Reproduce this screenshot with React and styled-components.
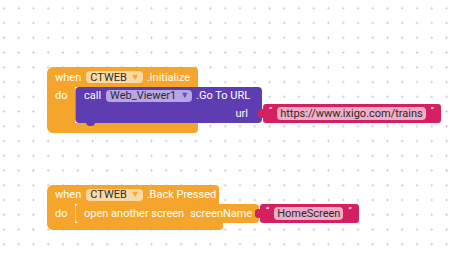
import React from 'react';
import styled, { createGlobalStyle } from 'styled-components';

const ORANGE = '#f6a52c';
const PURPLE = '#5e3cb1';
const PINK = '#d41f61';

const GlobalStyle = createGlobalStyle`
    html, body {
        margin: 0;
        padding: 0;
    }
    body {
        width: 456px;
        height: 257px;
        overflow: hidden;
        font-family: Roboto, "Liberation Sans", sans-serif;
    }
`;

const Workspace = styled.div`
    position: relative;
    width: 456px;
    height: 257px;
    background-color: #fff;
    background-image: radial-gradient(circle, #c9c9c9 0.8px, transparent 1.4px);
    background-size: 14.75px 14.75px;
    background-position: -3.4px 0.9px;
`;

// top-level block stacks sit at their own spot on the canvas
const Stack = styled.div`
    position: absolute;
    left: ${props => props.x}px;
    top: ${props => props.y}px;
    display: flex;
    flex-direction: column;
    align-items: flex-start;
`;

const Header = styled.div`
    width: ${props => props.width}px;
    height: ${props => props.height}px;
    box-sizing: border-box;
    background: ${ORANGE};
    border-radius: 6px 4px 0 0;
    display: flex;
    align-items: center;
    gap: 4px;
    padding-left: 8px;
`;

const Body = styled.div`
    display: flex;
    align-items: flex-start;
`;

const Arm = styled.div`
    width: 28px;
    align-self: stretch;
    box-sizing: border-box;
    background: ${ORANGE};
    display: flex;
    align-items: flex-start;
    font-size: 11px;
    line-height: 1;
    padding: ${props => props.top}px 0 0 8px;
`;

const Footer = styled.div`
    width: ${props => props.width}px;
    height: ${props => props.height}px;
    background: ${ORANGE};
    border-radius: 0 0 4px 6px;
`;

const Label = styled.span`
    color: #fff;
    font-size: 11px;
    line-height: 1;
    white-space: nowrap;
    margin-left: ${props => props.space || 0}px;
`;

const Dropdown = styled.span`
    display: inline-flex;
    align-items: center;
    gap: 4px;
    height: 12px;
    margin-left: 1px;
    padding: 0 3px 0 4px;
    border-radius: 4px;
    background: ${props => props.bg};
    color: #2d2d2d;
    font-size: 11px;
    line-height: 1;
    white-space: nowrap;
`;

const Arrow = styled.span`
    font-size: 9px;
    color: ${props => props.color};
`;

const Connected = styled.div`
    display: flex;
    align-items: flex-end;
`;

const Statement = styled.div`
    position: relative;
    width: ${props => props.width}px;
    box-sizing: border-box;
    background: ${props => props.color};
    border-radius: 4px;
    border-left: 1px solid rgba(255, 255, 255, 0.35);
    display: flex;
    flex-direction: column;
    &::after {
        content: "";
        position: absolute;
        left: 10px;
        bottom: -3px;
        width: 9px;
        height: 4px;
        border-radius: 0 0 4px 4px;
        background: ${props => props.color};
    }
`;

const StatementRow = styled.div`
    height: ${props => props.height}px;
    display: flex;
    align-items: center;
    justify-content: ${props => props.end ? 'flex-end' : 'flex-start'};
    gap: 4px;
    padding: 0 ${props => props.end ? 14 : 0}px 0 8px;
`;

const TextBlock = styled.div`
    position: relative;
    height: 19px;
    box-sizing: border-box;
    margin-left: 1px;
    background: ${PINK};
    border-radius: 3px;
    display: flex;
    align-items: center;
    gap: 5px;
    padding: 0 7px 0 6px;
    &::before {
        content: "";
        position: absolute;
        left: -5px;
        top: 5px;
        width: 6px;
        height: 9px;
        border-radius: 3px 0 0 3px;
        background: ${PINK};
    }
`;

const Quote = styled.span`
    color: #fff;
    font-size: 9px;
    line-height: 1;
    align-self: flex-start;
    margin-top: 3px;
`;

const StringField = styled.span`
    height: 13px;
    display: inline-flex;
    align-items: center;
    padding: 0 3px;
    border-radius: 4px;
    background: #f1adc6;
    color: #2a2a2a;
    font-size: 11px;
    line-height: 1;
    white-space: nowrap;
`;

function Text({ value }) {
    return (
        <TextBlock>
            <Quote>“</Quote>
            <StringField>{value}</StringField>
            <Quote>”</Quote>
        </TextBlock>
    );
}

export default function App() {
    return (
        <Workspace>
            <GlobalStyle />
            <Stack x={47} y={67}>
                <Header width={151} height={20}>
                    <Label>when</Label>
                    <Dropdown bg="#fbd9a4">CTWEB<Arrow color="#f4a937">▼</Arrow></Dropdown>
                    <Label>.Initialize</Label>
                </Header>
                <Body>
                    <Arm top={3}><Label>do</Label></Arm>
                    <Connected>
                        <Statement width={187} color={PURPLE}>
                            <StatementRow height={17}>
                                <Label>call</Label>
                                <Dropdown bg="#b7a5e6">Web_Viewer1<Arrow color="#6a4cc0">▼</Arrow></Dropdown>
                                <Label>.Go To URL</Label>
                            </StatementRow>
                            <StatementRow height={19} end>
                                <Label>url</Label>
                            </StatementRow>
                        </Statement>
                        <Text value="https://www.ixigo.com/trains" />
                    </Connected>
                </Body>
                <Footer width={151} height={10} />
            </Stack>

            <Stack x={47} y={185}>
                <Header width={172} height={19}>
                    <Label>when</Label>
                    <Dropdown bg="#fbd9a4">CTWEB<Arrow color="#f4a937">▼</Arrow></Dropdown>
                    <Label>.Back Pressed</Label>
                </Header>
                <Body>
                    <Arm top={4}><Label>do</Label></Arm>
                    <Connected>
                        <Statement width={184} color={ORANGE}>
                            <StatementRow height={19}>
                                <Label>open another screen</Label>
                                <Label space={2}>screenName</Label>
                            </StatementRow>
                        </Statement>
                        <Text value="HomeScreen" />
                    </Connected>
                </Body>
                <Footer width={176} height={7} />
            </Stack>
        </Workspace>
    );
}
